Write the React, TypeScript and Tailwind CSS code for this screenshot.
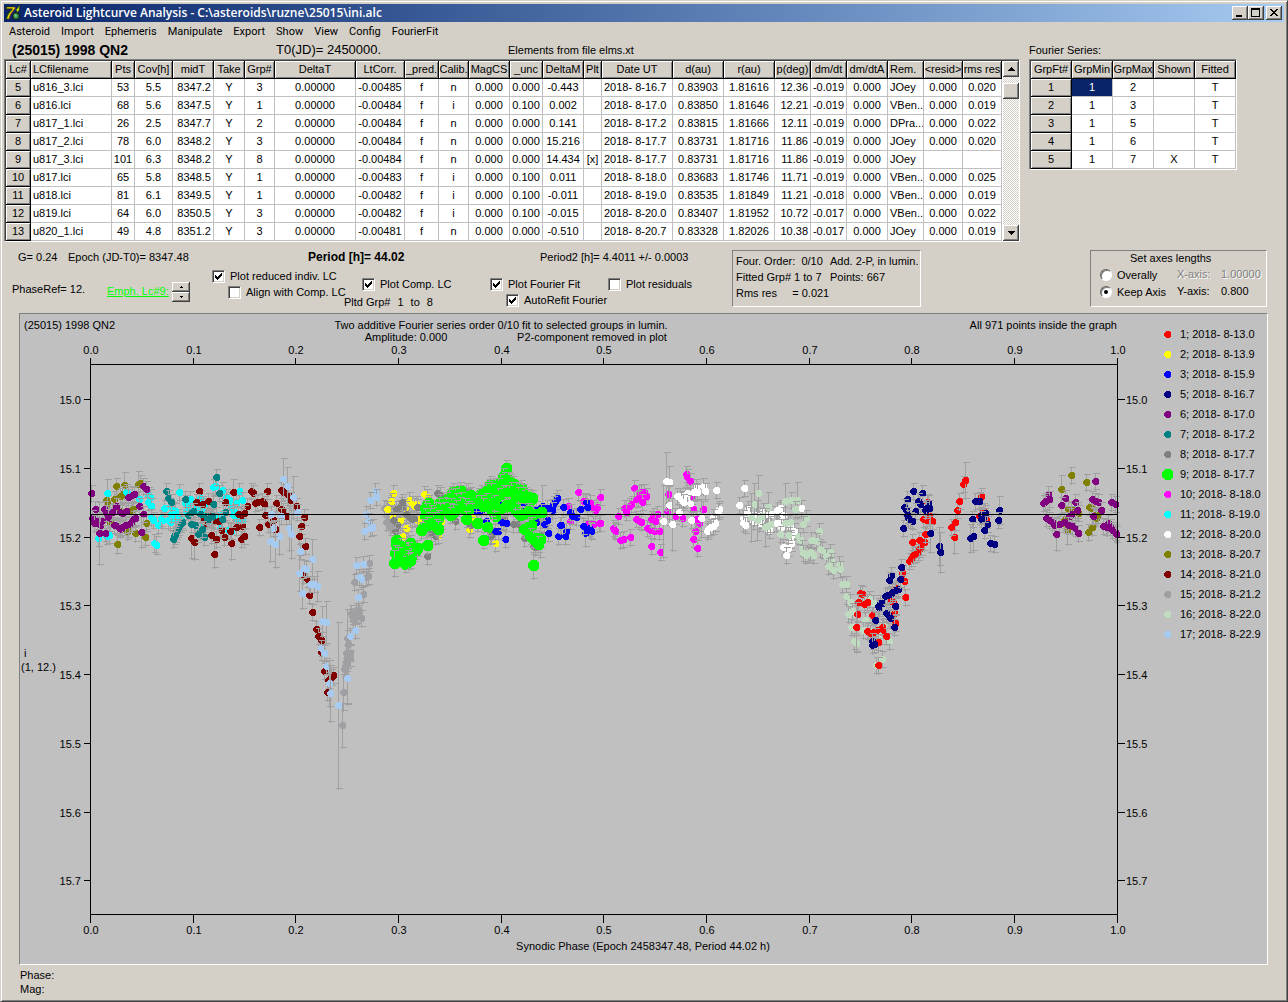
import { ReactNode, useState } from "react";
import clsx from "clsx";

type Column = { title: string; width: string; align: string };
type Group = { color: string; at: [number, number]; big?: boolean; points: string };

const MENU = ["Asteroid", "Import", "Ephemeris", "Manipulate", "Export", "Show", "View", "Config", "FourierFit"];

const LC_COLUMNS: Column[] = [
  { title: "Lc#", width: "w-[25px]", align: "text-center" },
  { title: "LCfilename", width: "w-[81px]", align: "text-left" },
  { title: "Pts", width: "w-[23px]", align: "text-center" },
  { title: "Cov[h]", width: "w-[38px]", align: "text-center" },
  { title: "midT", width: "w-[41px]", align: "text-right" },
  { title: "Take", width: "w-[31px]", align: "text-center" },
  { title: "Grp#", width: "w-[30px]", align: "text-center" },
  { title: "DeltaT", width: "w-[81px]", align: "text-center" },
  { title: "LtCorr.", width: "w-[49px]", align: "text-center" },
  { title: "_pred.", width: "w-[34px]", align: "text-center" },
  { title: "Calib.", width: "w-[30px]", align: "text-center" },
  { title: "MagCS", width: "w-[41px]", align: "text-center" },
  { title: "_unc", width: "w-[33px]", align: "text-center" },
  { title: "DeltaM", width: "w-[41px]", align: "text-center" },
  { title: "Plt", width: "w-[18px]", align: "text-center" },
  { title: "Date UT", width: "w-[71px]", align: "text-left" },
  { title: "d(au)", width: "w-[51px]", align: "text-center" },
  { title: "r(au)", width: "w-[51px]", align: "text-center" },
  { title: "p(deg)", width: "w-[36px]", align: "text-right" },
  { title: "dm/dt", width: "w-[36px]", align: "text-center" },
  { title: "dm/dtA", width: "w-[41px]", align: "text-center" },
  { title: "Rem.", width: "w-[36px]", align: "text-left" },
  { title: "<resid>", width: "w-[39px]", align: "text-center" },
  { title: "rms res", width: "w-[39px]", align: "text-center" },
];

const LC_ROWS = [
  "5|u816_3.lci|53|5.5|8347.2|Y|3|0.00000|-0.00485|f|n|0.000|0.000|-0.443||2018- 8-16.7|0.83903|1.81616|12.36|-0.019|0.000|JOey|0.000|0.020",
  "6|u816.lci|68|5.6|8347.5|Y|1|0.00000|-0.00484|f|i|0.000|0.100|0.002||2018- 8-17.0|0.83850|1.81646|12.21|-0.019|0.000|VBen..|0.000|0.019",
  "7|u817_1.lci|26|2.5|8347.7|Y|2|0.00000|-0.00484|f|n|0.000|0.000|0.141||2018- 8-17.2|0.83815|1.81666|12.11|-0.019|0.000|DPra...|0.000|0.022",
  "8|u817_2.lci|78|6.0|8348.2|Y|3|0.00000|-0.00484|f|n|0.000|0.000|15.216||2018- 8-17.7|0.83731|1.81716|11.86|-0.019|0.000|JOey|0.000|0.020",
  "9|u817_3.lci|101|6.3|8348.2|Y|8|0.00000|-0.00484|f|n|0.000|0.000|14.434|[x]|2018- 8-17.7|0.83731|1.81716|11.86|-0.019|0.000|JOey||",
  "10|u817.lci|65|5.8|8348.5|Y|1|0.00000|-0.00483|f|i|0.000|0.100|0.011||2018- 8-18.0|0.83683|1.81746|11.71|-0.019|0.000|VBen..|0.000|0.025",
  "11|u818.lci|81|6.1|8349.5|Y|1|0.00000|-0.00482|f|i|0.000|0.100|-0.011||2018- 8-19.0|0.83535|1.81849|11.21|-0.018|0.000|VBen..|0.000|0.019",
  "12|u819.lci|64|6.0|8350.5|Y|3|0.00000|-0.00482|f|i|0.000|0.100|-0.015||2018- 8-20.0|0.83407|1.81952|10.72|-0.017|0.000|VBen..|0.000|0.022",
  "13|u820_1.lci|49|4.8|8351.2|Y|3|0.00000|-0.00481|f|n|0.000|0.000|-0.510||2018- 8-20.7|0.83328|1.82026|10.38|-0.017|0.000|JOey|0.000|0.019",
];

const FT_COLUMNS: Column[] = [
  { title: "GrpFt#", width: "w-[41px]", align: "text-center" },
  { title: "GrpMin", width: "w-[41px]", align: "text-center" },
  { title: "GrpMax", width: "w-[41px]", align: "text-center" },
  { title: "Shown", width: "w-[41px]", align: "text-center" },
  { title: "Fitted", width: "w-[41px]", align: "text-center" },
];

const FT_ROWS = ["1|1|2||T", "2|1|3||T", "3|1|5||T", "4|1|6||T", "5|1|7|X|T"];

const LEGEND = [
  { color: "#ff0000", label: "1; 2018- 8-13.0" },
  { color: "#ffff00", label: "2; 2018- 8-13.9" },
  { color: "#0000ff", label: "3; 2018- 8-15.9" },
  { color: "#000080", label: "5; 2018- 8-16.7" },
  { color: "#800080", label: "6; 2018- 8-17.0" },
  { color: "#008080", label: "7; 2018- 8-17.2" },
  { color: "#808080", label: "8; 2018- 8-17.7" },
  { color: "#00ff00", label: "9; 2018- 8-17.7", big: true },
  { color: "#ff00ff", label: "10; 2018- 8-18.0" },
  { color: "#00ffff", label: "11; 2018- 8-19.0" },
  { color: "#ffffff", label: "12; 2018- 8-20.0" },
  { color: "#808000", label: "13; 2018- 8-20.7" },
  { color: "#800000", label: "14; 2018- 8-21.0" },
  { color: "#a0a0a4", label: "15; 2018- 8-21.2" },
  { color: "#c0dcc0", label: "16; 2018- 8-22.0" },
  { color: "#a6caf0", label: "17; 2018- 8-22.9" },
];

// x,y[,error] in thirds of a chart unit, counted from the group's corner
const GROUPS: Group[] = [
  {
    color: "#808000",
    at: [70, 440],
    points:
      "140,138 163,136,40 205,133,38 211,130 158,163 110,181 112,190 133,177 185,212 190,209 230,249 226,291 195,279 171,274 142,313,28 120,249 150,170 150,215 176,268",
  },
  {
    color: "#00ffff",
    at: [70, 440],
    points:
      "113,160,42 168,158 175,163 110,290 119,285 85,296 236,165 240,172 235,187 208,178 243,200 245,232 250,240 265,257 278,242 274,234 253,310,28 259,317,28 282,204 300,200 310,211 329,157 294,240 300,246 315,238 303,224 325,232 335,240 349,215 355,200 360,178 380,200 393,208 407,199 390,175 430,142 457,150 508,153 517,181 499,190 484,201 478,182 493,218 490,226 483,275 517,243 505,240 410,225 400,260 385,215 440,225 425,240 345,190 474,270 460,220 470,172 436,140 315,214 452,265",
  },
  {
    color: "#800080",
    at: [70, 440],
    points:
      "64,160 76,208 66,234 72,250 83,244 97,240 91,255 88,281,92 106,280 103,208 109,219 116,231 122,236 131,213 140,199 128,216 152,217 158,219 170,213 134,257 143,260 152,269 158,262 149,265 167,255 179,253 185,246 191,238 197,234 208,198 221,223 214,277,44 176,172 188,165 194,162 221,139 230,148",
  },
  {
    color: "#800000",
    at: [70, 440],
    points:
      "388,154 380,188 398,193 415,183 465,188 491,157,40 544,154 550,160 592,154 532,200 556,189 562,186 577,184 584,192 568,262 586,227 595,254 499,262 517,260 505,222 514,226 523,220 484,310,48 481,274 463,293 454,271 438,298 424,286 433,343,39 364,296,60 374,306,52 514,298 523,289 430,245 445,245 405,253 400,240 415,230 634,151 640,158 655,166 661,182 619,190 633,208 640,215 650,228 610,240 616,268 680,198 703,233 694,260 687,289 706,319 700,405 713,418 718,466 727,517 738,569 744,589 753,600 754,637 763,694 775,722 790,706 771,757 785,712",
  },
  {
    color: "#008080",
    at: [70, 440],
    points:
      "439,112 289,154 295,175 304,187 346,178 448,160 431,193 466,216 457,237 371,214 360,219 355,225 392,223 409,230 418,236 424,232 427,228 412,238 338,247 332,253 326,261 321,268 318,275 316,282 313,290 309,299 365,253 377,256 392,275 386,283 404,293 397,268",
  },
  {
    color: "#a0a0a4",
    at: [70, 440],
    points:
      "817,857,66 820,757,54 822,688 826,678 829,670 831,660 832,650,140 836,640 840,655 841,640 835,613 832,595 847,530 850,540 855,530 862,525 868,515 874,535 853,427 880,463 895,408 888,412 899,370 826,690 830,640 845,520 858,515",
  },
  {
    color: "#a0a0a4",
    at: [340, 440],
    points: "132,205 140,204 150,196 145,246 155,254 155,190 165,220 205,298 195,275 150,262 140,248 180,248",
  },
  {
    color: "#a6caf0",
    at: [70, 440],
    points:
      "640,118,63 652,139,57 670,173,64 683,218 634,228 658,265,66 664,283,72 628,289,54 603,224 609,265 601,304,60 616,313,69 727,358,60 692,334 704,384 710,388 687,400,54 697,460,45 721,434 733,433 742,439,45 757,545,45 769,547,62 753,625 762,639 769,679 778,729,70 781,761,83 805,796,249 832,715,78 841,589 856,571 865,472 874,418 869,412 859,377 880,373",
  },
  {
    color: "#a6caf0",
    at: [340, 440],
    points: "106,154 108,172 90,181 78,222 84,244 73,274 98,262 92,264",
  },
  {
    color: "#ffff00",
    at: [340, 440],
    points:
      "159,160 154,183 143,209 209,182 216,192 224,200 230,192 252,163 262,172 235,244 199,264 188,289 190,225 180,240 195,208 389,267 399,236 466,310 305,243 295,285 232,232 160,232 378,155",
  },
  {
    color: "#808080",
    at: [340, 440],
    points:
      "185,196 190,203 178,204 170,209 188,187 200,222 211,235 216,238 223,236 232,203 172,256 166,275 160,240 293,161 346,243 300,165 262,349 275,280 285,290 385,155 390,255 455,285 493,235 490,243 520,253 535,253 553,295 580,318 585,322 495,150 480,215 450,290 265,265 300,205 600,240 545,215 600,285,66",
  },
  {
    color: "#ff00ff",
    at: [340, 440],
    points:
      "715,157 781,172 772,202 765,212 758,205 750,190 778,250 760,253 745,250 735,185 685,200 690,243 730,183",
  },
  {
    color: "#0000ff",
    at: [340, 440],
    points:
      "652,175 646,185 640,194 634,203 636,210 606,200,64 670,202 691,218 697,228 709,232 721,208 739,188 742,202 621,242 614,252 625,280 665,255 655,289 679,274 677,288 735,280,40 748,266 754,274 730,260 752,270 497,298 475,275 500,250 484,188 410,215 425,213 440,243 555,200 560,188 590,248 465,275 590,208 660,256 545,190 508,200 484,248 622,205",
  },
  {
    color: "#00ff00",
    at: [340, 440],
    big: true,
    points:
      "500,86 490,110 494,122 505,122 482,128 512,128 465,138 452,133 445,147 448,142 475,138 520,132 545,145 538,155 530,150 515,150 550,158 556,166 577,175 570,180 565,172 540,175 520,178 508,160 490,160 475,168 425,160 415,170 430,165 440,155 455,155 400,180 410,190 425,190 440,185 430,200 390,165 380,178 385,170 360,150 358,160 340,155 335,162 345,170 328,172 320,180 350,185 365,180 360,195 375,200 385,208 378,215 350,205 335,200 320,200 330,215 310,195 300,188 298,200 312,210 290,210 280,210 270,205 262,195 265,190 255,205 258,215 275,220 290,225 300,215 270,230 255,230 265,240 285,240 295,235 280,248 262,255 250,262 290,262 294,268 245,272 262,316 230,325 225,335 215,330 220,340 205,318 210,310 205,330 200,340 190,335 185,345 190,355 178,338 172,325 168,312 170,300 180,320 165,340 175,345 215,350 205,355 210,360 195,372 163,370,38 205,365 340,218 330,225 378,238 412,250 442,262 430,301 465,228 458,215 455,205 462,190 490,204 500,195 510,200 530,215 540,225 555,222 565,215 580,222 605,216 575,255 565,262 553,268 570,290 580,298 590,295 600,298 595,312 580,376,39 232,325 525,185 535,165",
  },
  {
    color: "#ff00ff",
    at: [600, 440],
    points:
      "103,145 118,160 124,157 133,157 140,169 110,179 127,187 116,175 95,193 88,198 80,205 74,206 80,216 55,230 110,238 118,243 124,247 39,265 46,275 44,272 62,302 70,298 91,292 142,265 150,270 164,275 178,274 155,320 181,337 160,230 172,223 165,243 155,237 204,163 203,213 225,230 247,234 280,207 311,208 290,238 299,250 286,274 279,298 292,325 259,103 263,112 270,124 275,168 0,172 0,250",
  },
  {
    color: "#ffffff",
    at: [600, 440],
    points:
      "199,125,88 208,127,48 209,197,60 238,218 191,244,108 216,253,78 232,169 250,180 240,170 256,165 262,170 245,178 262,160 250,188 270,190 288,142 285,155 292,158 309,140 316,153 280,157 349,151 358,208 355,215 340,232 345,250 340,258 325,268 322,275 330,262 305,234,56 274,242 433,145 418,197 445,208 440,220 430,235 452,225 430,250 437,255 470,225 480,240 460,245 490,215 515,222 500,235 508,270 540,205 532,212 530,250 545,245 550,225 565,250 605,206 583,274 575,285 572,300 575,310 551,322 565,325 558,345 500,225 570,262 478,250 545,262",
  },
  {
    color: "#c0dcc0",
    at: [600, 440],
    points:
      "475,160,54 463,192,64 505,202,46 455,232,72 472,242,60 488,230 496,263,56 512,254 503,260 541,283 565,287 557,184,54 573,181 593,181,54 586,208 619,234 610,253 572,246 557,250 595,290 600,302 607,325 658,274 633,300 648,305 617,346 610,340 625,342 640,346 632,338 661,328 668,330 678,350 691,338 694,363 685,379 690,375 701,390 718,373 722,388 728,433 738,433 739,469 750,487 745,523 758,515 753,562 763,604 769,610 808,478 795,542 790,572 840,590 847,658 867,604 830,676 850,560 820,490 805,570 770,520",
  },
  {
    color: "#ff0000",
    at: [600, 440],
    points:
      "781,460 787,463 775,486 793,493 802,488 772,523 769,562,76 817,526 803,574 812,580 820,578 828,570 846,562 850,572 859,589 835,607 835,676",
  },
  {
    color: "#ff0000",
    at: [830, 440],
    points:
      "227,472 193,520 197,549 190,488 180,485 222,424 218,400 200,445 238,365 243,356 250,347 257,342 264,338 268,328 273,322 247,307 268,302 282,307 286,284 293,187 307,243 290,240 298,230 373,292,48 364,261 376,247 383,211 389,184 400,133 406,121,54 455,169 447,228 470,240 448,180 460,215 280,237",
  },
  {
    color: "#000080",
    at: [830, 440],
    points:
      "135,541 128,603 126,615 132,612 148,506 152,490 158,490 165,468 172,467 180,463 188,458 197,450 205,447 168,520 175,525 180,535 196,499 193,562 184,406 177,421 214,382 211,418 220,265 232,178 250,154 277,160 265,184 270,192 223,201 229,210 256,213 235,234 240,240 247,245 232,225 295,190 298,206 286,211 290,205 301,280,56 329,319,58 331,337,60 437,184 447,184 427,238 421,295,42 431,290,42 455,225 462,228 466,220 455,237 473,253 463,271 481,310 493,313 508,211,42 505,241 145,500",
  },
  {
    color: "#808000",
    at: [830, 440],
    points:
      "725,106 694,148,42 769,127 775,277 711,272,42 715,207 725,212 735,212 778,203 785,205 795,225 800,235 788,262 710,255 703,240 745,220 805,225",
  },
  {
    color: "#800080",
    at: [830, 440],
    points:
      "655,163 658,178 640,190 645,184 706,175 737,188 694,196 742,212 725,222 718,230 648,235 658,240 667,247 673,257 688,254 703,247 715,257 728,260 735,266 680,283,48 745,281 797,124 787,178 795,184 804,186 845,187 856,193 814,211 790,228 820,260 828,262 835,250 842,262 848,272 855,276 860,283 833,262",
  },
];

const X_TICKS = [
  { x: 91, label: "0.0" },
  { x: 194, label: "0.1" },
  { x: 296, label: "0.2" },
  { x: 399, label: "0.3" },
  { x: 502, label: "0.4" },
  { x: 604, label: "0.5" },
  { x: 707, label: "0.6" },
  { x: 810, label: "0.7" },
  { x: 912, label: "0.8" },
  { x: 1015, label: "0.9" },
  { x: 1118, label: "1.0" },
];

const Y_TICKS = [
  { y: 400, label: "15.0" },
  { y: 469, label: "15.1" },
  { y: 538, label: "15.2" },
  { y: 606, label: "15.3" },
  { y: 675, label: "15.4" },
  { y: 744, label: "15.5" },
  { y: 813, label: "15.6" },
  { y: 881, label: "15.7" },
];

const RAISED =
  "bg-[#d4d0c8] shadow-[inset_-1px_-1px_0_#404040,inset_1px_1px_0_#fff,inset_-2px_-2px_0_#808080]";
const SUNKEN = "border border-t-[#808080] border-l-[#808080] border-r-white border-b-white";
const HEAD_CELL =
  "h-[18px] overflow-hidden border-r border-b border-black bg-[#d4d0c8] font-normal shadow-[inset_1px_1px_0_#fff,inset_-1px_-1px_0_#808080]";

const DataGrid = ({
  label,
  columns,
  rows,
  selected,
  children,
}: {
  label: string;
  columns: Column[];
  rows: string[];
  selected?: boolean;
  children?: ReactNode;
}) => (
  <div className={clsx("flex shrink-0 bg-white", SUNKEN)}>
    <div className="flex border-t border-l border-[#404040]">
      <table aria-label={label} className="w-px table-fixed border-separate border-spacing-0 leading-[17px] whitespace-pre">
        <thead>
          <tr>
            {columns.map((column) => (
              <th
                key={column.title}
                scope="col"
                className={clsx(
                  HEAD_CELL,
                  column.width,
                  column.align === "text-left" && column.title !== "Date UT" ? "pl-[2px] text-left" : "text-center",
                )}
              >
                {column.title}
              </th>
            ))}
          </tr>
        </thead>
        <tbody>
          {rows.map((row, rowIndex) => (
            <tr key={row}>
              {row.split("|").map((value, index) =>
                index === 0 ? (
                  <th key={index} scope="row" className={HEAD_CELL}>
                    {value}
                  </th>
                ) : (
                  <td
                    key={index}
                    className={clsx(
                      "h-[18px] overflow-hidden border-r border-b border-[#c0c0c0]",
                      columns[index].align,
                      columns[index].align === "text-left" && "pl-[2px]",
                      columns[index].align === "text-right" && "pr-[2px]",
                      selected && rowIndex === 0 && index === 1 && "bg-[#0a246a] text-white",
                    )}
                  >
                    {value}
                  </td>
                ),
              )}
            </tr>
          ))}
        </tbody>
      </table>
      {children}
    </div>
  </div>
);

const Check = ({ label, checked = false }: { label: string; checked?: boolean }) => {
  const [on, setOn] = useState(checked);
  return (
    <label className="flex h-4 items-center gap-[5px] whitespace-nowrap">
      <span className="grid">
        <input
          type="checkbox"
          checked={on}
          onChange={() => setOn(!on)}
          className="col-start-1 row-start-1 size-[13px] appearance-none border border-t-[#808080] border-r-white border-b-white border-l-[#808080] bg-white shadow-[inset_1px_1px_0_#404040,inset_-1px_-1px_0_#d4d0c8]"
        />
        {on && (
          <svg className="pointer-events-none col-start-1 row-start-1 size-[13px]" viewBox="0 0 13 13" shapeRendering="crispEdges">
            <path d="M3 5h1v1h1v1h1V6h1V5h1V4h1V3h1v3H9v1H8v1H7v1H6v1H5V9H4V8H3z" />
          </svg>
        )}
      </span>
      {label}
    </label>
  );
};

const Radio = ({ label, checked }: { label: string; checked?: boolean }) => (
  <label className="flex h-[17px] items-center gap-[5px] whitespace-nowrap">
    <span className="grid">
      <input
        type="radio"
        name="axis"
        defaultChecked={checked}
        className="peer col-start-1 row-start-1 size-[12px] appearance-none rounded-full border border-t-[#606060] border-r-white border-b-white border-l-[#606060] bg-white shadow-[inset_1px_1px_0_#808080]"
      />
      <span className="pointer-events-none col-start-1 row-start-1 hidden size-1 place-self-center rounded-full bg-black peer-checked:block" />
    </span>
    {label}
  </label>
);

const Points = ({ group }: { group: Group }) => (
  <g fill={group.color}>
    {group.points.split(" ").map((entry, index) => {
      const [px, py, error] = entry.split(",").map(Number);
      const x = group.at[0] + Math.floor(px / 3);
      const y = group.at[1] + Math.floor(py / 3);
      const bar = error ? Math.round(error / 3) : 8 + ((index * 5) % 5);
      return (
        <g key={index}>
          <path
            d={`M${x} ${y - bar}V${y + bar + 1}M${x - 3} ${y - bar}h7M${x - 3} ${y + bar}h7`}
            transform="translate(.5 .5)"
            stroke="#a0a0a0"
          />
          {group.big ? (
            <path d={`M${x - 2} ${y - 5}h5l3 3v5l-3 3h-5l-3-3v-5z`} />
          ) : (
            <path d={`M${x - 1} ${y - 3}h3l2 2v3l-2 2h-3l-2-2v-3z`} />
          )}
        </g>
      );
    })}
  </g>
);

const Chart = () => (
  <svg className="block w-full min-w-0 flex-1 text-[11px]" viewBox="20 314 1136 650" role="img" aria-label="Lightcurve">
    <g shapeRendering="crispEdges">
      {GROUPS.map((group, index) => (
        <Points key={index} group={group} />
      ))}
    </g>
    <g stroke="#000" fill="none" shapeRendering="crispEdges" transform="translate(.5 .5)">
      <path d="M90 364H1117V914H90z" />
      <path d="M90 514H1117" />
      {X_TICKS.map((tick) => (
        <path key={tick.label} d={`M${tick.x - 1} 364v-7M${tick.x - 1} 914v8`} />
      ))}
      {Y_TICKS.map((tick) => (
        <path key={tick.label} d={`M90 ${tick.y - 1}h-7M1117 ${tick.y - 1}h7`} />
      ))}
    </g>
    <g textAnchor="middle">
      {X_TICKS.map((tick) => (
        <g key={tick.label}>
          <text x={tick.x} y="354">{tick.label}</text>
          <text x={tick.x} y="934">{tick.label}</text>
        </g>
      ))}
      <text x="501" y="329">Two additive Fourier series order 0/10 fit to selected groups in lumin.</text>
      <text x="406" y="341">Amplitude: 0.000</text>
      <text x="592" y="341">P2-component removed in plot</text>
      <text x="643" y="950">Synodic Phase (Epoch 2458347.48, Period 44.02 h)</text>
    </g>
    {Y_TICKS.map((tick) => (
      <g key={tick.label}>
        <text x="81" y={tick.y + 4} textAnchor="end">{tick.label}</text>
        <text x="1126" y={tick.y + 4}>{tick.label}</text>
      </g>
    ))}
    <text x="24" y="329">(25015) 1998 QN2</text>
    <text x="1117" y="329" textAnchor="end">All 971 points inside the graph</text>
    <text x="24" y="657">i</text>
    <text x="21" y="671">(1, 12.)</text>
  </svg>
);

const TitleBar = () => (
  <header className="flex h-[18px] items-center gap-[3px] bg-linear-to-r from-[#0a246a] to-[#a6caf0] pr-[2px] pl-[1px]">
    <svg className="size-4 overflow-visible" viewBox="0 0 16 16">
      <path d="M11 5l4-5-1 4h1l-4 5 1-3z" fill="#c8f400" stroke="#303000" strokeWidth="0.5" />
      <circle cx="11" cy="11" r="3.5" fill="#2f8b45" stroke="#101010" />
      <path d="M9 9l3 1-1 3z" fill="#7fd09a" />
      <text x="0" y="14" fontSize="17" fontWeight="bold" fontStyle="italic" fill="#f4e400" stroke="#302800" strokeWidth="0.6">
        7
      </text>
    </svg>
    <h1 className="flex-1 font-['Open_Sans',sans-serif] text-[12px] leading-[18px] font-semibold whitespace-nowrap text-white">
      Asteroid Lightcurve Analysis - C:\asteroids\ruzne\25015\ini.alc
    </h1>
    <div className="flex">
      <button aria-label="Minimize" className={clsx("flex h-[14px] w-4 items-center justify-center", RAISED)}>
        <svg className="h-[14px] w-4" viewBox="0 0 16 14" shapeRendering="crispEdges">
          <path d="M4 9h6v2H4z" />
        </svg>
      </button>
      <button aria-label="Maximize" className={clsx("flex h-[14px] w-4 items-center justify-center", RAISED)}>
        <svg className="h-[14px] w-4" viewBox="0 0 16 14" shapeRendering="crispEdges">
          <path d="M3 2h9v9H3zM4 4v6h7V4z" fillRule="evenodd" />
        </svg>
      </button>
      <button aria-label="Close" className={clsx("ml-[2px] flex h-[14px] w-4 items-center justify-center", RAISED)}>
        <svg className="h-[14px] w-4" viewBox="0 0 16 14" shapeRendering="crispEdges">
          <path d="M4 3h2v1h1v1h2V4h1V3h2v1h-1v1h-1v1H9v1h1v1h1v1h1v1h-2V9H9V8H7v1H6v1H4V9h1V8h1V7h1V6H6V5H5V4H4z" />
        </svg>
      </button>
    </div>
  </header>
);

const ScrollBar = () => (
  <div className="ml-[1px] flex w-4 flex-col bg-[repeating-conic-gradient(#fff_0_25%,#d4d0c8_0_50%)] bg-size-[2px_2px]">
    <button aria-label="Scroll up" className={clsx("flex h-4 items-center justify-center", RAISED)}>
      <svg className="h-1 w-[7px]" viewBox="0 0 7 4" shapeRendering="crispEdges">
        <path d="M3 0h1v1h1v1h1v1h1v1H0V3h1V2h1V1h1z" />
      </svg>
    </button>
    <div className={clsx("mt-[6px] h-4", RAISED)} />
    <button aria-label="Scroll down" className={clsx("mt-auto flex h-4 items-center justify-center", RAISED)}>
      <svg className="h-1 w-[7px]" viewBox="0 0 7 4" shapeRendering="crispEdges">
        <path d="M0 0h7v1H6v1H5v1H4v1H3V3H2V2H1V1H0z" />
      </svg>
    </button>
  </div>
);

const Controls = () => (
  <section className="flex items-start pt-2">
    <div className="w-[728px] shrink-0">
      <div className="flex h-[14px] items-center whitespace-nowrap">
        <span className="ml-[14px] w-[50px]">G= 0.24</span>
        <span className="w-[240px]">Epoch (JD-T0)= 8347.48</span>
        <span className="w-[232px] text-[12px] font-bold">Period [h]= 44.02</span>
        <span>Period2 [h]= 4.4011 +/- 0.0003</span>
      </div>
      <div className="flex items-start whitespace-nowrap">
        <span className="mt-[18px] ml-2 w-[95px]">PhaseRef= 12.</span>
        <a href="#emph" className="mt-5 w-[65px] text-[#00ff00] underline">
          Emph. Lc#9:
        </a>
        <div className="mt-[18px] flex w-[18px] flex-col">
          <button aria-label="Next curve" className={clsx("flex h-[10px] items-center justify-center", RAISED)}>
            <svg className="h-[2px] w-[3px]" viewBox="0 0 3 2" shapeRendering="crispEdges">
              <path d="M1 0h1v1h1v1H0V1h1z" />
            </svg>
          </button>
          <button aria-label="Previous curve" className={clsx("flex h-[10px] items-center justify-center", RAISED)}>
            <svg className="h-[2px] w-[3px]" viewBox="0 0 3 2" shapeRendering="crispEdges">
              <path d="M0 0h3v1H2v1H1V1H0z" />
            </svg>
          </button>
        </div>
        <div className="mt-1 ml-[22px] w-[132px]">
          <Check label="Plot reduced indiv. LC" checked />
          <div className="pl-4">
            <Check label="Align with Comp. LC" />
          </div>
        </div>
        <div className="mt-3 w-[146px]">
          <div className="pl-[18px]">
            <Check label="Plot Comp. LC" checked />
          </div>
          <p className="mt-[3px] flex gap-[7px]">
            <span>Pltd Grp#</span>
            <span>1</span>
            <span>to</span>
            <span>8</span>
          </p>
        </div>
        <div className="mt-3 w-[118px]">
          <Check label="Plot Fourier Fit" checked />
          <div className="pl-4">
            <Check label="AutoRefit Fourier" checked />
          </div>
        </div>
        <div className="mt-3">
          <Check label="Plot residuals" />
        </div>
      </div>
    </div>
    <div className={clsx("grid h-[57px] w-[189px] shrink-0 grid-cols-[94px_1fr] content-start pt-[2px] pl-[3px] leading-4 whitespace-pre", SUNKEN)}>
      <span>Four. Order:  0/10</span>
      <span>Add. 2-P, in lumin.</span>
      <span>Fitted Grp# 1 to 7</span>
      <span>Points: 667</span>
      <span>Rms res     = 0.021</span>
    </div>
    <fieldset className={clsx("mr-[17px] ml-auto h-[57px] w-[177px] min-w-0 shrink-0 pl-[9px]", SUNKEN)}>
      <p className="pl-[30px] leading-[15px]">Set axes lengths</p>
      <div className="flex">
        <div className="w-[77px]">
          <Radio label="Overally" />
          <Radio label="Keep Axis" checked />
        </div>
        <dl className="grid grid-cols-[44px_auto] leading-[17px]">
          <dt className="text-[#808080] [text-shadow:1px_1px_0_#fff]">X-axis:</dt>
          <dd className="text-[#808080] [text-shadow:1px_1px_0_#fff]">1.00000</dd>
          <dt>Y-axis:</dt>
          <dd>0.800</dd>
        </dl>
      </div>
    </fieldset>
  </section>
);

const App: React.FC = () => (
  <div className="min-h-screen border border-t-[#d4d0c8] border-r-[#404040] border-b-[#404040] border-l-[#d4d0c8] bg-[#d4d0c8] font-['Liberation_Sans',Arial,sans-serif] text-[11px] leading-[14px] text-black shadow-[inset_1px_1px_0_#fff,inset_-1px_-1px_0_#808080]">
    <div className="p-[3px]">
      <TitleBar />
      <nav className="flex h-[19px] items-center gap-[11px] pt-[1px] pl-[5px] font-['Roboto',sans-serif] text-[11px]">
        {MENU.map((item) => (
          <button key={item}>{item}</button>
        ))}
      </nav>
      <main>
        <div className="flex items-start">
          <div className="mr-[9px]">
            <div className="flex h-[18px] items-center whitespace-nowrap">
              <h2 className="ml-2 w-[264px] text-[14px] font-bold">(25015) 1998 QN2</h2>
              <span className="w-[232px] text-[13px]">T0(JD)= 2450000.</span>
              <span>Elements from file elms.xt</span>
            </div>
            <DataGrid label="Lightcurves" columns={LC_COLUMNS} rows={LC_ROWS}>
              <ScrollBar />
            </DataGrid>
          </div>
          <div>
            <p className="flex h-[18px] items-center">Fourier Series:</p>
            <DataGrid label="Fourier series" columns={FT_COLUMNS} rows={FT_ROWS} selected />
          </div>
        </div>
        <Controls />
        <section className={clsx("mt-1 mr-4 ml-[15px] flex bg-[#c0c0c0]", SUNKEN)}>
          <Chart />
          <ul className="w-[111px] shrink-0 pt-[10px] pl-[6px] leading-5">
            {LEGEND.map((item) => (
              <li key={item.label} className="flex h-5 items-center gap-[7px] whitespace-pre">
                <svg className="size-[11px]" viewBox="0 0 11 11" fill={item.color} shapeRendering="crispEdges">
                  <path d={item.big ? "M3 0h5l3 3v5l-3 3H3L0 8V3z" : "M4 2h3l2 2v3L7 9H4L2 7V4z"} />
                </svg>
                {item.label}
              </li>
            ))}
          </ul>
        </section>
        <footer className="pt-[3px] pl-4">
          <p>Phase:</p>
          <p>Mag:</p>
        </footer>
      </main>
    </div>
  </div>
);

export default App;
